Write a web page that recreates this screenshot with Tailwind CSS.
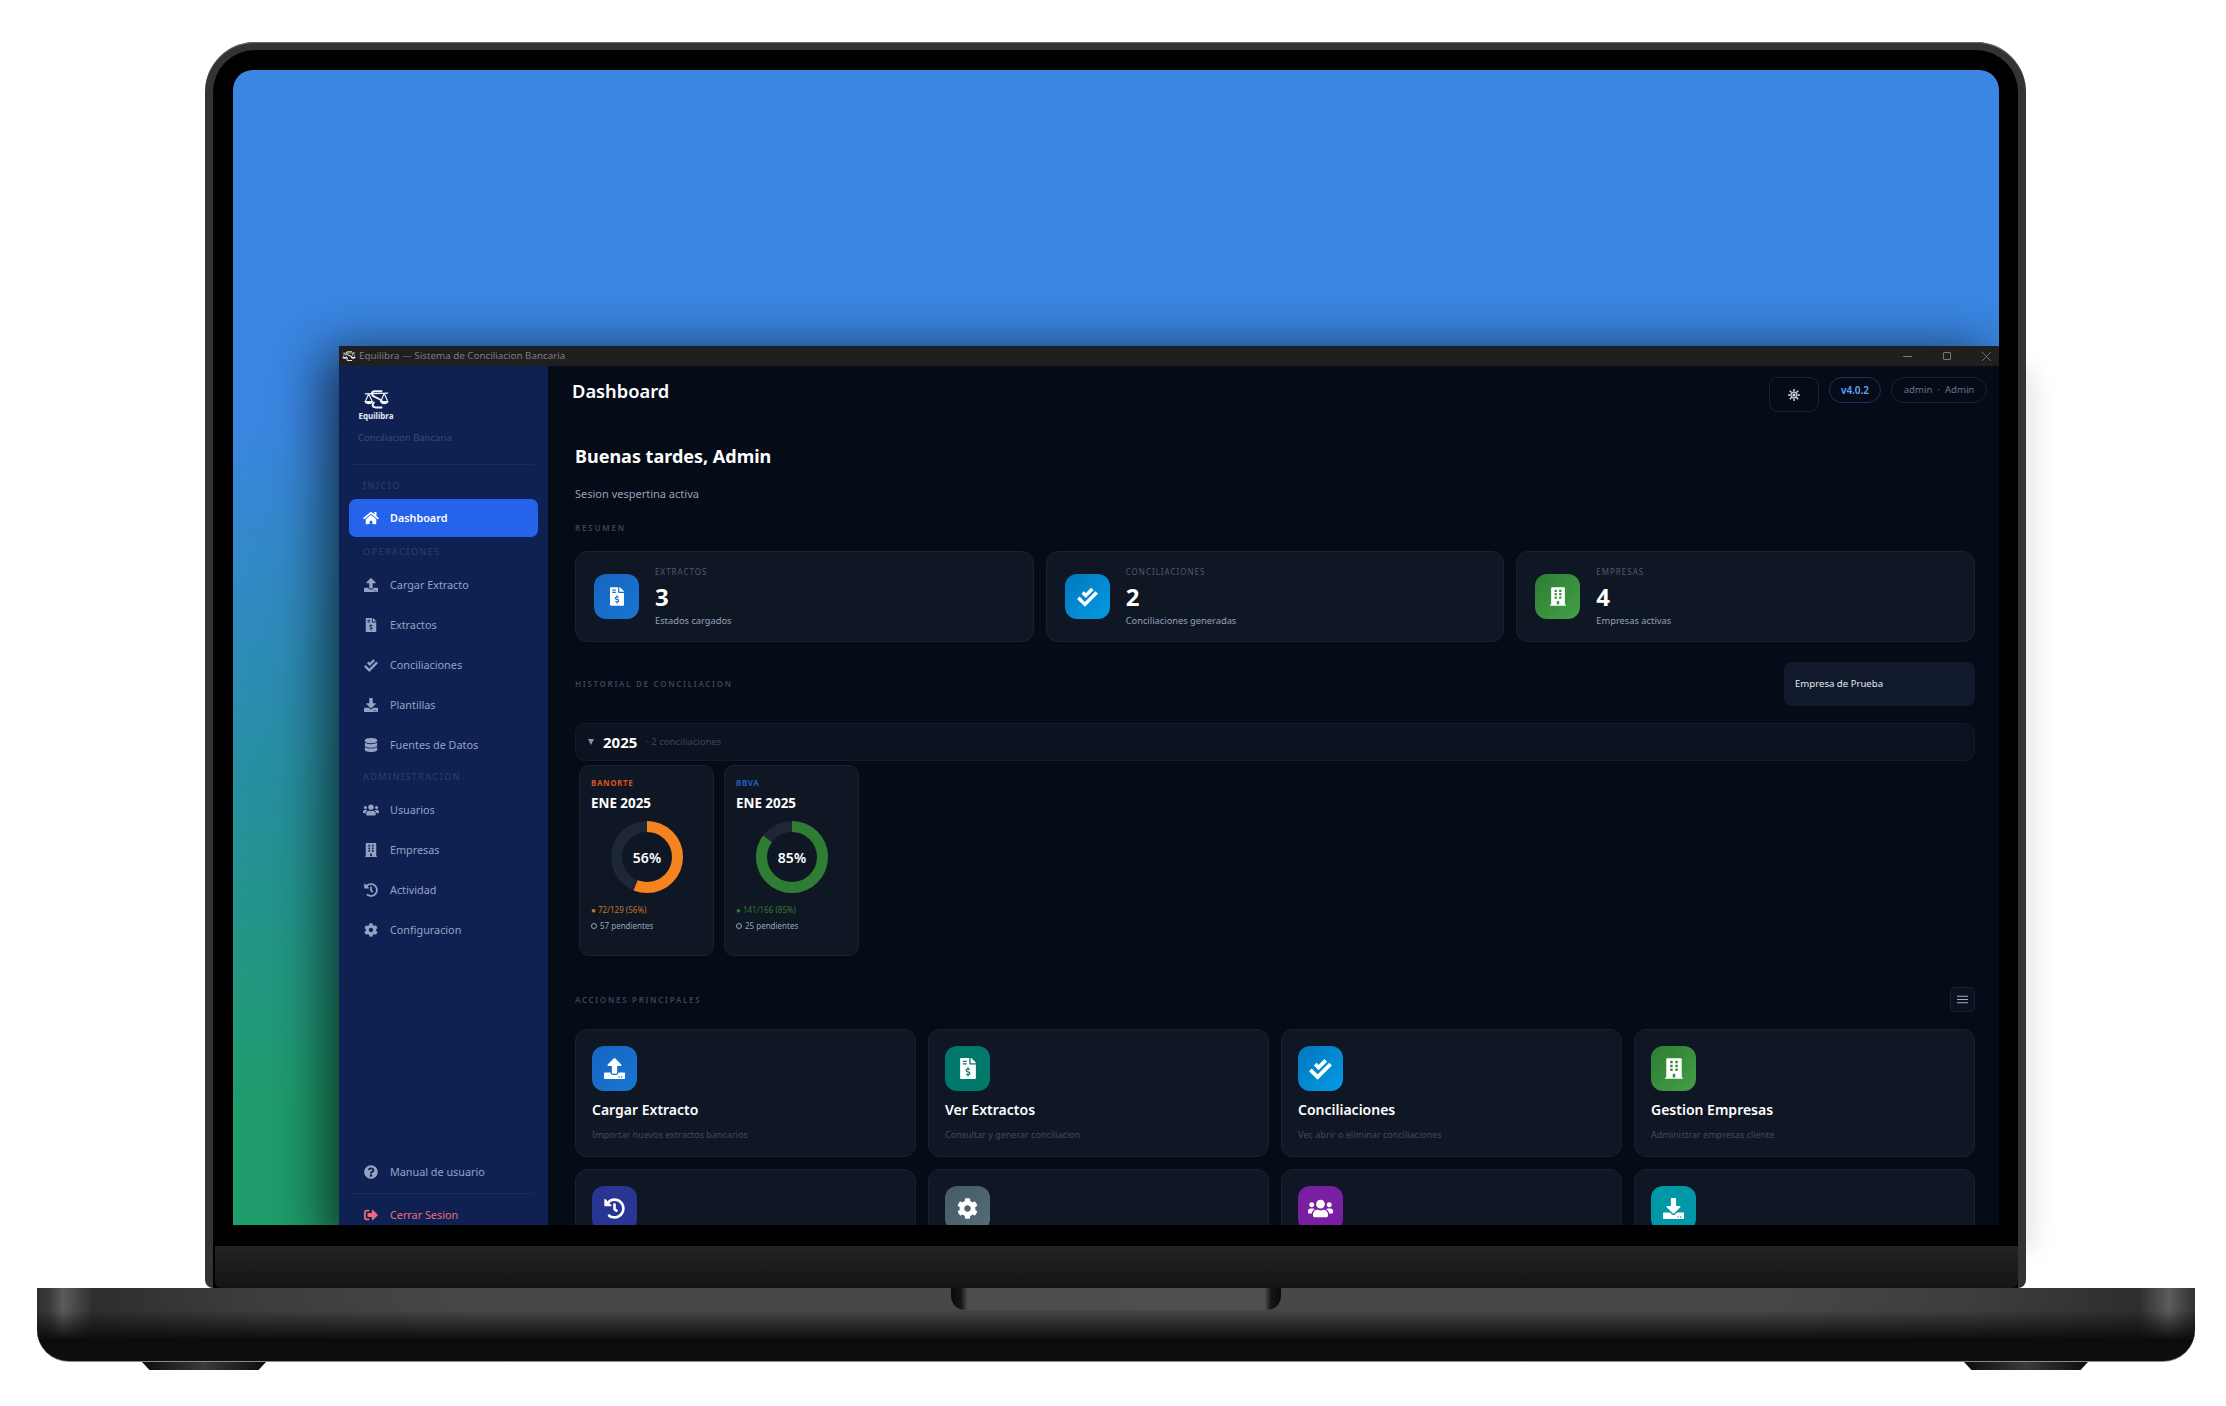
<!DOCTYPE html>
<html lang="es">
<head>
<meta charset="UTF-8">
<title>Equilibra — Sistema de Conciliacion Bancaria</title>
<script src="https://cdn.jsdelivr.net/npm/@tailwindcss/browser@4"></script>
</head>
<body class="bg-white font-['Noto_Sans',sans-serif] overflow-hidden">

<!-- iconos -->
<svg class="hidden">
  <symbol id="i-home" viewBox="0 0 576 512"><path fill="currentColor" d="M280.37 148.26L96 300.11V464a16 16 0 0 0 16 16l112.06-.29a16 16 0 0 0 15.92-16V368a16 16 0 0 1 16-16h64a16 16 0 0 1 16 16v95.64a16 16 0 0 0 16 16.05L464 480a16 16 0 0 0 16-16V300L295.67 148.26a12.19 12.19 0 0 0-15.3 0zM571.6 251.47L488 182.56V44.05a12 12 0 0 0-12-12h-56a12 12 0 0 0-12 12v72.61L318.47 43a48 48 0 0 0-61 0L4.34 251.47a12 12 0 0 0-1.6 16.9l25.5 31A12 12 0 0 0 45.15 301l235.22-193.74a12.19 12.19 0 0 1 15.3 0L530.9 301a12 12 0 0 0 16.9-1.6l25.5-31a12 12 0 0 0-1.7-16.93z"/></symbol>
  <symbol id="i-upload" viewBox="0 0 512 512"><path fill="currentColor" d="M296 384h-80c-13.3 0-24-10.7-24-24V192h-87.7c-17.8 0-26.7-21.5-14.1-34.1L242.3 5.7c7.5-7.5 19.8-7.5 27.3 0l152.2 152.2c12.6 12.6 3.7 34.1-14.1 34.1H320v168c0 13.3-10.7 24-24 24zm216-8v112c0 13.3-10.7 24-24 24H24c-13.3 0-24-10.7-24-24V376c0-13.3 10.7-24 24-24h136v8c0 30.9 25.1 56 56 56h80c30.9 0 56-25.1 56-56v-8h136c13.3 0 24 10.7 24 24zm-124 88c0-11-9-20-20-20s-20 9-20 20 9 20 20 20 20-9 20-20zm64 0c0-11-9-20-20-20s-20 9-20 20 9 20 20 20 20-9 20-20z"/></symbol>
  <symbol id="i-download" viewBox="0 0 512 512"><path fill="currentColor" d="M216 0h80c13.3 0 24 10.7 24 24v168h87.7c17.8 0 26.7 21.5 14.1 34.1L269.7 378.3c-7.5 7.5-19.8 7.5-27.3 0L90.1 226.1c-12.6-12.6-3.7-34.1 14.1-34.1H192V24c0-13.3 10.7-24 24-24zm296 376v112c0 13.3-10.7 24-24 24H24c-13.3 0-24-10.7-24-24V376c0-13.3 10.7-24 24-24h146.7l49 49c20.1 20.1 52.5 20.1 72.6 0l49-49H488c13.3 0 24 10.7 24 24zm-124 88c0-11-9-20-20-20s-20 9-20 20 9 20 20 20 20-9 20-20zm64 0c0-11-9-20-20-20s-20 9-20 20 9 20 20 20 20-9 20-20z"/></symbol>
  <symbol id="i-invoice" viewBox="0 0 384 512"><path fill="currentColor" d="M377 105L279.1 7c-4.5-4.5-10.6-7-17-7H256v128h128v-6.1c0-6.3-2.5-12.4-7-16.9zm-153 31V0H24C10.7 0 0 10.7 0 24v464c0 13.3 10.7 24 24 24h336c13.3 0 24-10.7 24-24V160H248c-13.2 0-24-10.8-24-24zM64 72c0-4.42 3.58-8 8-8h80c4.42 0 8 3.58 8 8v16c0 4.42-3.58 8-8 8H72c-4.42 0-8-3.58-8-8V72zm0 80v-16c0-4.42 3.58-8 8-8h80c4.42 0 8 3.58 8 8v16c0 4.42-3.58 8-8 8H72c-4.42 0-8-3.58-8-8zm144 263.88V440c0 4.42-3.58 8-8 8h-16c-4.42 0-8-3.58-8-8v-24.29c-11.29-.58-22.27-4.52-31.37-11.35-3.9-2.93-4.1-8.77-.57-12.14l11.75-11.21c2.77-2.64 6.89-2.76 10.13-.73 3.87 2.42 8.26 3.72 12.82 3.72h28.11c6.5 0 11.8-5.92 11.8-13.19 0-5.95-3.61-11.19-8.77-12.73l-45-13.5c-18.59-5.58-31.58-23.42-31.58-43.39 0-24.52 19.05-44.44 42.67-45.07V232c0-4.42 3.58-8 8-8h16c4.42 0 8 3.58 8 8v24.29c11.29.58 22.27 4.51 31.37 11.35 3.9 2.93 4.1 8.77.57 12.14l-11.75 11.21c-2.77 2.64-6.89 2.76-10.13.73-3.87-2.43-8.26-3.72-12.82-3.72h-28.11c-6.5 0-11.8 5.92-11.8 13.19 0 5.95 3.61 11.19 8.77 12.73l45 13.5c18.59 5.58 31.58 23.42 31.58 43.39 0 24.53-19.05 44.44-42.67 45.07z"/></symbol>
  <symbol id="i-check" viewBox="0 0 24 24"><path fill="none" stroke="currentColor" stroke-width="4" d="M1.500 13.500L9 21 22.500 7.500M6.500 7.500L10 11l7.500-7.500"/></symbol>
  <symbol id="i-database" viewBox="0 0 448 512"><path fill="currentColor" d="M448 73.143v45.714C448 159.143 347.667 192 224 192S0 159.143 0 118.857V73.143C0 32.857 100.333 0 224 0s224 32.857 224 73.143zM448 176v102.857C448 319.143 347.667 352 224 352S0 319.143 0 278.857V176c48.125 33.143 136.208 48.572 224 48.572S399.874 209.143 448 176zm0 160v102.857C448 479.143 347.667 512 224 512S0 479.143 0 438.857V336c48.125 33.143 136.208 48.572 224 48.572S399.874 369.143 448 336z"/></symbol>
  <symbol id="i-users" viewBox="0 0 640 512"><path fill="currentColor" d="M96 224c35.3 0 64-28.7 64-64s-28.7-64-64-64-64 28.7-64 64 28.7 64 64 64zm448 0c35.3 0 64-28.7 64-64s-28.7-64-64-64-64 28.7-64 64 28.7 64 64 64zm32 32h-64c-17.6 0-33.5 7.1-45.1 18.6 40.3 22.1 68.9 62 75.1 109.4h66c17.7 0 32-14.3 32-32v-32c0-35.3-28.7-64-64-64zm-256 0c61.9 0 112-50.1 112-112S381.9 32 320 32 208 82.1 208 144s50.1 112 112 112zm76.8 32h-8.3c-20.8 10-43.9 16-68.5 16s-47.6-6-68.5-16h-8.3C179.6 288 128 339.6 128 403.2V432c0 26.5 21.5 48 48 48h288c26.5 0 48-21.5 48-48v-28.8c0-63.6-51.6-115.2-115.2-115.2zm-223.7-13.4C161.5 263.1 145.6 256 128 256H64c-35.3 0-64 28.7-64 64v32c0 17.7 14.3 32 32 32h65.9c6.3-47.4 34.9-87.3 75.2-109.4z"/></symbol>
  <symbol id="i-building" viewBox="0 0 448 512"><path fill="currentColor" d="M436 480h-20V24c0-13.255-10.745-24-24-24H56C42.745 0 32 10.745 32 24v456H12c-6.627 0-12 5.373-12 12v20h448v-20c0-6.627-5.373-12-12-12zM128 76c0-6.627 5.373-12 12-12h40c6.627 0 12 5.373 12 12v40c0 6.627-5.373 12-12 12h-40c-6.627 0-12-5.373-12-12V76zm0 96c0-6.627 5.373-12 12-12h40c6.627 0 12 5.373 12 12v40c0 6.627-5.373 12-12 12h-40c-6.627 0-12-5.373-12-12v-40zm52 148h-40c-6.627 0-12-5.373-12-12v-40c0-6.627 5.373-12 12-12h40c6.627 0 12 5.373 12 12v40c0 6.627-5.373 12-12 12zm76 160h-64v-84c0-6.627 5.373-12 12-12h40c6.627 0 12 5.373 12 12v84zm64-172c0 6.627-5.373 12-12 12h-40c-6.627 0-12-5.373-12-12v-40c0-6.627 5.373-12 12-12h40c6.627 0 12 5.373 12 12v40zm0-96c0 6.627-5.373 12-12 12h-40c-6.627 0-12-5.373-12-12v-40c0-6.627 5.373-12 12-12h40c6.627 0 12 5.373 12 12v40zm0-96c0 6.627-5.373 12-12 12h-40c-6.627 0-12-5.373-12-12V76c0-6.627 5.373-12 12-12h40c6.627 0 12 5.373 12 12v40z"/></symbol>
  <symbol id="i-history" viewBox="0 0 512 512"><path fill="currentColor" d="M504 255.531c.253 136.64-111.18 248.372-247.82 248.468-59.015.042-113.223-20.53-155.822-54.911-11.077-8.94-11.905-25.541-1.839-35.607l11.267-11.267c8.609-8.609 22.353-9.551 31.891-1.984C173.062 425.135 212.781 440 256 440c101.705 0 184-82.311 184-184 0-101.705-82.311-184-184-184-48.814 0-93.149 18.969-126.068 49.932l50.754 50.754c10.08 10.08 2.941 27.314-11.313 27.314H24c-8.837 0-16-7.163-16-16V38.627c0-14.254 17.234-21.393 27.314-11.314l49.372 49.372C129.209 34.136 189.552 8 256 8c136.81 0 247.747 110.78 248 247.531zm-180.912 78.784l9.823-12.63c8.138-10.463 6.253-25.542-4.21-33.679L288 256.349V152c0-13.255-10.745-24-24-24h-16c-13.255 0-24 10.745-24 24v135.651l65.409 50.874c10.463 8.137 25.541 6.253 33.679-4.21z"/></symbol>
  <symbol id="i-cog" viewBox="0 0 512 512"><path fill="currentColor" d="M487.4 315.7l-42.6-24.6c4.3-23.2 4.3-47 0-70.2l42.6-24.6c4.9-2.8 7.1-8.6 5.5-14-11.1-35.6-30-67.8-54.7-94.6-3.8-4.1-10-5.1-14.8-2.3L380.8 110c-17.9-15.4-38.5-27.3-60.8-35.1V25.8c0-5.6-3.9-10.5-9.4-11.7-36.7-8.2-74.3-7.8-109.2 0-5.5 1.2-9.4 6.1-9.4 11.7V75c-22.2 7.9-42.8 19.8-60.8 35.1L88.7 85.5c-4.9-2.8-11-1.9-14.8 2.3-24.7 26.7-43.6 58.9-54.7 94.6-1.7 5.4.6 11.2 5.5 14L67.3 221c-4.3 23.2-4.3 47 0 70.2l-42.6 24.6c-4.9 2.8-7.1 8.6-5.5 14 11.1 35.6 30 67.8 54.7 94.6 3.8 4.1 10 5.1 14.8 2.3l42.6-24.6c17.9 15.4 38.5 27.3 60.8 35.1v49.2c0 5.6 3.9 10.5 9.4 11.7 36.7 8.2 74.3 7.8 109.2 0 5.5-1.2 9.4-6.1 9.4-11.7v-49.2c22.2-7.9 42.8-19.8 60.8-35.1l42.6 24.6c4.9 2.8 11 1.9 14.8-2.3 24.7-26.7 43.6-58.9 54.7-94.6 1.5-5.5-.7-11.3-5.6-14.1zM256 336c-44.1 0-80-35.9-80-80s35.9-80 80-80 80 35.9 80 80-35.9 80-80 80z"/></symbol>
  <symbol id="i-question" viewBox="0 0 512 512"><path fill="currentColor" d="M504 256c0 136.997-111.043 248-248 248S8 392.997 8 256C8 119.083 119.043 8 256 8s248 111.083 248 248zM262.655 90c-54.497 0-89.255 22.957-116.549 63.758-3.536 5.286-2.353 12.415 2.715 16.258l34.699 26.31c5.205 3.947 12.621 3.008 16.665-2.122 17.864-22.658 30.113-35.797 57.303-35.797 20.429 0 45.698 13.148 45.698 32.958 0 14.976-12.363 22.667-32.534 33.976C247.128 238.528 216 254.941 216 296v4c0 6.627 5.373 12 12 12h56c6.627 0 12-5.373 12-12v-1.333c0-28.462 83.186-29.647 83.186-106.667 0-58.002-60.165-102-116.531-102zM256 338c-25.365 0-46 20.635-46 46 0 25.364 20.635 46 46 46s46-20.636 46-46c0-25.365-20.635-46-46-46z"/></symbol>
  <symbol id="i-signout" viewBox="0 0 512 512"><path fill="currentColor" d="M497 273L329 441c-15 15-41 4.5-41-17v-96H152c-13.3 0-24-10.7-24-24v-96c0-13.3 10.7-24 24-24h136V88c0-21.4 25.9-32 41-17l168 168c9.3 9.4 9.3 24.6 0 34zM192 436v-40c0-6.6-5.4-12-12-12H96c-17.7 0-32-14.3-32-32V160c0-17.7 14.3-32 32-32h84c6.6 0 12-5.4 12-12V76c0-6.6-5.4-12-12-12H96c-53 0-96 43-96 96v192c0 53 43 96 96 96h84c6.6 0 12-5.4 12-12z"/></symbol>
  <symbol id="i-logo" viewBox="0 0 40 34" fill="none" stroke="currentColor">
    <path stroke-width="3" d="M29 5H17c-3 0-4 2-4 4s2 4 5 5l6 3c3 1.500 5 3 5 5M29 30H19c-3 0-5-2-5-4s1-3 3-4"/>
    <path stroke-width="1.800" d="M2 9l36-1M8 9L3 20M8 9l5 11M32 8l-5 12M32 8l5 12"/>
    <path fill="currentColor" stroke="none" d="M1 20h14c-1 4-4 5-7 5s-6-1-7-5zM25 20h14c-1 4-4 5-7 5s-6-1-7-5z"/>
  </symbol>
</svg>

<!-- sombra de la ventana que asoma por el lado derecho -->
<div class="absolute left-[1950px] top-[370px] w-[76px] h-[880px] shadow-[6px_0_26px_rgba(0,0,0,0.12)]"></div>

<!-- tapa del portatil -->
<div class="absolute left-[205px] top-[42px] w-[1821px] h-[1246px] rounded-t-[50px] rounded-b-[8px] bg-[#333333] px-[8px] pt-[8px] shadow-[inset_0_1px_0_#6a6a6a]">
  <div class="h-full rounded-t-[42px] bg-black pt-[20px] pl-[20px] pr-[19px] flex flex-col">
    <div class="relative h-[1155px] rounded-t-[20px] overflow-hidden bg-[linear-gradient(180deg,#3a86e2_0%,#3a86e2_30%,#2790a0_62%,#1f9d6c_90%,#1f9d6c_100%)]">

      <!-- ventana de la aplicacion -->
      <div class="absolute left-[106px] top-[276px] w-[1660px] h-[900px] flex flex-col bg-[#060b18] shadow-[-14px_6px_50px_rgba(0,0,0,0.65)]">
        <div class="h-[20px] shrink-0 flex items-center bg-[#1f1f1f] pl-[3px] pr-[8px] text-[9.8px] text-[#7d7d7d]">
          <svg class="w-[14px] h-[12px] text-[#e5e5e5] mr-[3px]"><use href="#i-logo"/></svg>
          <span>Equilibra — Sistema de Conciliacion Bancaria</span>
          <div class="ml-auto flex items-center gap-[31px]">
            <div class="w-[9px] h-px bg-[#777777]"></div>
            <div class="w-[8px] h-[8px] border border-[#777777] rounded-[1px]"></div>
            <svg class="w-[9px] h-[9px] text-[#777777]" viewBox="0 0 10 10"><path d="M0 0l10 10M10 0L0 10" stroke="currentColor"/></svg>
          </div>
        </div>

        <div class="flex flex-1 min-h-0">
          <!-- barra lateral -->
          <aside class="w-[209px] shrink-0 bg-[#0f2152] flex flex-col px-[10px] pb-[11px] text-[10.8px] text-[#94a3c4]">
            <div class="pl-[4px] pt-[22px]">
              <div class="w-[40px] ml-[3px] flex flex-col items-center">
                <svg class="w-[27px] h-[22px] text-[#f1f5f9]"><use href="#i-logo"/></svg>
                <span class="text-[8px] leading-[10px] font-bold text-[#e5e9f2] mt-[1px]">Equilibra</span>
              </div>
              <p class="text-[9.4px] leading-[14px] text-[#3a4b74] mt-[10px] ml-[5px]">Conciliacion Bancaria</p>
            </div>
            <div class="h-px bg-[#1c2c57] mt-[19px] mx-[4px]"></div>
            <p class="mt-[15px] pl-[14px] text-[9px] leading-[12px] tracking-[1.5px] text-[#2f3f6b]">INICIO</p>
            <a class="mt-[7px] h-[38px] flex items-center gap-[11px] pl-[14px] rounded-[7px] bg-[#2563eb] text-white font-semibold">
              <svg class="w-[16px] h-[14px]"><use href="#i-home"/></svg>Dashboard</a>
            <p class="mt-[9px] mb-[7px] pl-[14px] text-[9px] leading-[12px] tracking-[1.5px] text-[#2f3f6b]">OPERACIONES</p>
            <a class="h-[40px] flex items-center gap-[11px] pl-[14px]"><svg class="w-[16px] h-[14px]"><use href="#i-upload"/></svg>Cargar Extracto</a>
            <a class="h-[40px] flex items-center gap-[11px] pl-[14px]"><svg class="w-[16px] h-[14px]"><use href="#i-invoice"/></svg>Extractos</a>
            <a class="h-[40px] flex items-center gap-[11px] pl-[14px]"><svg class="w-[16px] h-[14px]"><use href="#i-check"/></svg>Conciliaciones</a>
            <a class="h-[40px] flex items-center gap-[11px] pl-[14px]"><svg class="w-[16px] h-[14px]"><use href="#i-download"/></svg>Plantillas</a>
            <a class="h-[40px] flex items-center gap-[11px] pl-[14px]"><svg class="w-[16px] h-[14px]"><use href="#i-database"/></svg>Fuentes de Datos</a>
            <p class="mt-[6px] mb-[7px] pl-[14px] text-[9px] leading-[12px] tracking-[1.5px] text-[#2f3f6b]">ADMINISTRACION</p>
            <a class="h-[40px] flex items-center gap-[11px] pl-[14px]"><svg class="w-[16px] h-[14px]"><use href="#i-users"/></svg>Usuarios</a>
            <a class="h-[40px] flex items-center gap-[11px] pl-[14px]"><svg class="w-[16px] h-[14px]"><use href="#i-building"/></svg>Empresas</a>
            <a class="h-[40px] flex items-center gap-[11px] pl-[14px]"><svg class="w-[16px] h-[14px]"><use href="#i-history"/></svg>Actividad</a>
            <a class="h-[40px] flex items-center gap-[11px] pl-[14px]"><svg class="w-[16px] h-[14px]"><use href="#i-cog"/></svg>Configuracion</a>
            <a class="mt-auto h-[40px] flex items-center gap-[11px] pl-[14px]"><svg class="w-[16px] h-[14px]"><use href="#i-question"/></svg>Manual de usuario</a>
            <div class="h-px bg-[#1c2c57] mx-[4px] my-[1px]"></div>
            <a class="h-[40px] flex items-center gap-[11px] pl-[14px] text-[#ee6b7b]"><svg class="w-[16px] h-[14px]"><use href="#i-signout"/></svg>Cerrar Sesion</a>
          </aside>

          <!-- contenido -->
          <main class="flex-1 min-w-0 bg-[#060b18]">
            <header class="flex justify-between items-start pt-[11px] pl-[24px] pr-[12px]">
              <h1 class="text-[18.3px] leading-[28px] font-semibold text-white">Dashboard</h1>
              <div class="flex items-start gap-[10px]">
                <button class="w-[50px] h-[35px] flex items-center justify-center rounded-[9px] border border-[#1a2233] text-[#cbd5e1]">
                  <svg class="w-[12px] h-[12px]" viewBox="0 0 24 24" stroke="currentColor" stroke-width="3"><path d="M12 0v5M12 19v5M0 12h5M19 12h5M3.500 3.500L7 7M17 17l3.500 3.500M3.500 20.500L7 17M17 7l3.500-3.500"/><circle cx="12" cy="12" r="7" fill="currentColor" stroke="none"/><circle cx="12" cy="12" r="4" fill="none" stroke="#060b18" stroke-width="1.500"/></svg>
                </button>
                <span class="w-[52px] h-[26px] flex items-center justify-center rounded-[13px] border border-[#1c3258] text-[10px] font-semibold text-[#60a5fa]">v4.0.2</span>
                <span class="w-[96px] h-[26px] flex items-center justify-center rounded-[13px] border border-[#1a2233] text-[9.6px] text-[#64748b]">admin &nbsp;·&nbsp; Admin</span>
              </div>
            </header>

            <div class="pl-[27px] pr-[24px]">
              <h2 class="mt-[30px] text-[18px] leading-[28px] font-bold text-white">Buenas tardes, Admin</h2>
              <p class="mt-[16px] text-[11px] leading-[16px] text-[#94a3b8]">Sesion vespertina activa</p>
              <p class="mt-[20px] text-[8px] leading-[12px] font-semibold tracking-[1.8px] text-[#3a465c]">RESUMEN</p>

              <section class="mt-[17px] grid grid-cols-3 gap-[12px]">
                <div class="h-[91px] flex items-center gap-[16px] pl-[18px] rounded-[12px] border border-[#1a2232] bg-[#0f1624]">
                  <div class="w-[45px] h-[45px] flex items-center justify-center rounded-[12px] bg-[linear-gradient(135deg,#1565c0,#1976d2)] text-white"><svg class="w-[14px] h-[19px]"><use href="#i-invoice"/></svg></div>
                  <div>
                    <p class="text-[8px] leading-[12px] tracking-[1px] text-[#4f5b70]">EXTRACTOS</p>
                    <p class="mt-[4px] text-[24px] leading-[30px] font-bold text-white">3</p>
                    <p class="mt-[2px] text-[9.3px] leading-[14px] text-[#94a3b8]">Estados cargados</p>
                  </div>
                </div>
                <div class="h-[91px] flex items-center gap-[16px] pl-[18px] rounded-[12px] border border-[#1a2232] bg-[#0f1624]">
                  <div class="w-[45px] h-[45px] flex items-center justify-center rounded-[12px] bg-[linear-gradient(135deg,#0277bd,#039be5)] text-white"><svg class="w-[21px] h-[21px]"><use href="#i-check"/></svg></div>
                  <div>
                    <p class="text-[8px] leading-[12px] tracking-[1px] text-[#4f5b70]">CONCILIACIONES</p>
                    <p class="mt-[4px] text-[24px] leading-[30px] font-bold text-white">2</p>
                    <p class="mt-[2px] text-[9.3px] leading-[14px] text-[#94a3b8]">Conciliaciones generadas</p>
                  </div>
                </div>
                <div class="h-[91px] flex items-center gap-[16px] pl-[18px] rounded-[12px] border border-[#1a2232] bg-[#0f1624]">
                  <div class="w-[45px] h-[45px] flex items-center justify-center rounded-[12px] bg-[linear-gradient(135deg,#2e7d32,#43a047)] text-white"><svg class="w-[16px] h-[19px]"><use href="#i-building"/></svg></div>
                  <div>
                    <p class="text-[8px] leading-[12px] tracking-[1px] text-[#4f5b70]">EMPRESAS</p>
                    <p class="mt-[4px] text-[24px] leading-[30px] font-bold text-white">4</p>
                    <p class="mt-[2px] text-[9.3px] leading-[14px] text-[#94a3b8]">Empresas activas</p>
                  </div>
                </div>
              </section>

              <div class="mt-[20px] flex items-center justify-between">
                <p class="text-[8px] leading-[12px] font-semibold tracking-[1.7px] text-[#3a465c]">HISTORIAL DE CONCILIACION</p>
                <div class="w-[191px] h-[44px] flex items-center pl-[11px] rounded-[8px] bg-[#111a2c] text-[9.6px] text-[#e2e8f0]">Empresa de Prueba</div>
              </div>

              <div class="mt-[17px] h-[38px] flex items-center pl-[12px] rounded-[10px] border border-[#141c2b] bg-[#0c1220]">
                <span class="w-0 h-0 border-x-[3.500px] border-x-transparent border-t-[6px] border-t-[#8a96a8]"></span>
                <span class="ml-[9px] text-[15px] font-bold text-white">2025</span>
                <span class="ml-[9px] text-[9.5px] text-[#3b4658]">· 2 conciliaciones</span>
              </div>

              <section class="mt-[4px] pl-[4px] flex gap-[10px]">
                <div class="w-[135px] h-[191px] rounded-[10px] border border-[#1a2232] bg-[#0f1624] pl-[11px] pt-[11px]">
                  <p class="text-[8px] leading-[12px] font-bold tracking-[0.6px] text-[#d9541e]">BANORTE</p>
                  <p class="mt-[5px] text-[13.4px] leading-[18px] font-bold text-white">ENE 2025</p>
                  <div class="relative mt-[9px] ml-[20px] w-[72px] h-[72px]">
                    <svg class="w-[72px] h-[72px] -rotate-90" viewBox="0 0 72 72" fill="none" stroke-width="11"><circle cx="36" cy="36" r="30.500" stroke="#1e2736"/><circle cx="36" cy="36" r="30.500" stroke="#f5841f" stroke-dasharray="107.300 191.600"/></svg>
                    <span class="absolute inset-0 flex items-center justify-center text-[14px] font-semibold text-white">56%</span>
                  </div>
                  <p class="mt-[11px] text-[8px] leading-[12px] text-[#c2752c]">● 72/129 (56%)</p>
                  <p class="mt-[4px] flex items-center gap-[3px] text-[8px] leading-[12px] text-[#94a3b8]"><span class="w-[6px] h-[6px] rounded-full border border-[#94a3b8]"></span>57 pendientes</p>
                </div>
                <div class="w-[135px] h-[191px] rounded-[10px] border border-[#1a2232] bg-[#0f1624] pl-[11px] pt-[11px]">
                  <p class="text-[8px] leading-[12px] font-bold tracking-[0.6px] text-[#1d5fb8]">BBVA</p>
                  <p class="mt-[5px] text-[13.4px] leading-[18px] font-bold text-white">ENE 2025</p>
                  <div class="relative mt-[9px] ml-[20px] w-[72px] h-[72px]">
                    <svg class="w-[72px] h-[72px] -rotate-90" viewBox="0 0 72 72" fill="none" stroke-width="11"><circle cx="36" cy="36" r="30.500" stroke="#1e2736"/><circle cx="36" cy="36" r="30.500" stroke="#2e7d32" stroke-dasharray="162.900 191.600"/></svg>
                    <span class="absolute inset-0 flex items-center justify-center text-[14px] font-semibold text-white">85%</span>
                  </div>
                  <p class="mt-[11px] text-[8px] leading-[12px] text-[#2e7d32]">● 141/166 (85%)</p>
                  <p class="mt-[4px] flex items-center gap-[3px] text-[8px] leading-[12px] text-[#94a3b8]"><span class="w-[6px] h-[6px] rounded-full border border-[#94a3b8]"></span>25 pendientes</p>
                </div>
              </section>

              <div class="mt-[31px] flex items-center justify-between">
                <p class="text-[8px] leading-[12px] font-semibold tracking-[1.7px] text-[#3a465c]">ACCIONES PRINCIPALES</p>
                <button class="w-[25px] h-[25px] flex items-center justify-center rounded-[5px] border border-[#1a2232] bg-[#0b1120] text-[#a0aec0]">
                  <svg class="w-[11px] h-[11px]" viewBox="0 0 12 12" stroke="currentColor" stroke-width="1.200"><path d="M0 2.500h12M0 6h12M0 9.500h12"/></svg>
                </button>
              </div>

              <section class="mt-[17px] grid grid-cols-4 gap-[12px]">
                <div class="h-[128px] pl-[16px] pt-[16px] rounded-[12px] border border-[#1a2232] bg-[#0f1624]">
                  <div class="w-[45px] h-[45px] flex items-center justify-center rounded-[12px] bg-[linear-gradient(135deg,#1565c0,#1976d2)] text-white"><svg class="w-[21px] h-[21px]"><use href="#i-upload"/></svg></div>
                  <p class="mt-[9px] text-[14px] leading-[20px] font-semibold text-white">Cargar Extracto</p>
                  <p class="mt-[8px] text-[9px] leading-[14px] text-[#414c5e]">Importar nuevos extractos bancarios</p>
                </div>
                <div class="h-[128px] pl-[16px] pt-[16px] rounded-[12px] border border-[#1a2232] bg-[#0f1624]">
                  <div class="w-[45px] h-[45px] flex items-center justify-center rounded-[12px] bg-[#00796b] text-white"><svg class="w-[16px] h-[21px]"><use href="#i-invoice"/></svg></div>
                  <p class="mt-[9px] text-[14px] leading-[20px] font-semibold text-white">Ver Extractos</p>
                  <p class="mt-[8px] text-[9px] leading-[14px] text-[#414c5e]">Consultar y generar conciliacion</p>
                </div>
                <div class="h-[128px] pl-[16px] pt-[16px] rounded-[12px] border border-[#1a2232] bg-[#0f1624]">
                  <div class="w-[45px] h-[45px] flex items-center justify-center rounded-[12px] bg-[linear-gradient(135deg,#0277bd,#039be5)] text-white"><svg class="w-[23px] h-[23px]"><use href="#i-check"/></svg></div>
                  <p class="mt-[9px] text-[14px] leading-[20px] font-semibold text-white">Conciliaciones</p>
                  <p class="mt-[8px] text-[9px] leading-[14px] text-[#414c5e]">Ver, abrir o eliminar conciliaciones</p>
                </div>
                <div class="h-[128px] pl-[16px] pt-[16px] rounded-[12px] border border-[#1a2232] bg-[#0f1624]">
                  <div class="w-[45px] h-[45px] flex items-center justify-center rounded-[12px] bg-[linear-gradient(135deg,#2e7d32,#43a047)] text-white"><svg class="w-[18px] h-[21px]"><use href="#i-building"/></svg></div>
                  <p class="mt-[9px] text-[14px] leading-[20px] font-semibold text-white">Gestion Empresas</p>
                  <p class="mt-[8px] text-[9px] leading-[14px] text-[#414c5e]">Administrar empresas cliente</p>
                </div>
                <div class="h-[128px] pl-[16px] pt-[16px] rounded-[12px] border border-[#1a2232] bg-[#0f1624]">
                  <div class="w-[45px] h-[45px] flex items-center justify-center rounded-[12px] bg-[#283593] text-white"><svg class="w-[21px] h-[21px]"><use href="#i-history"/></svg></div>
                </div>
                <div class="h-[128px] pl-[16px] pt-[16px] rounded-[12px] border border-[#1a2232] bg-[#0f1624]">
                  <div class="w-[45px] h-[45px] flex items-center justify-center rounded-[12px] bg-[linear-gradient(135deg,#455a64,#546e7a)] text-white"><svg class="w-[21px] h-[21px]"><use href="#i-cog"/></svg></div>
                </div>
                <div class="h-[128px] pl-[16px] pt-[16px] rounded-[12px] border border-[#1a2232] bg-[#0f1624]">
                  <div class="w-[45px] h-[45px] flex items-center justify-center rounded-[12px] bg-[#7b1fa2] text-white"><svg class="w-[25px] h-[21px]"><use href="#i-users"/></svg></div>
                </div>
                <div class="h-[128px] pl-[16px] pt-[16px] rounded-[12px] border border-[#1a2232] bg-[#0f1624]">
                  <div class="w-[45px] h-[45px] flex items-center justify-center rounded-[12px] bg-[#0097a7] text-white"><svg class="w-[21px] h-[21px]"><use href="#i-download"/></svg></div>
                </div>
              </section>
            </div>
          </main>
        </div>
      </div>
    </div>
    <!-- barbilla -->
    <div class="flex-1 pt-[21px] -ml-[18px] -mr-[19px]">
      <div class="h-full rounded-b-[6px] bg-[linear-gradient(180deg,#232323,#141414)]"></div>
    </div>
  </div>
</div>

<!-- base del portatil -->
<div class="absolute left-[37px] top-[1288px] w-[2158px] h-[74px] rounded-b-[32px] border-b border-[#8a8a8a] bg-[linear-gradient(180deg,transparent_30%,#0b0b0b_72%,#0f0f0f_100%),linear-gradient(90deg,#303030_0,#3a3a3a_0.6%,#5c5c5c_1.2%,#2e2e2e_2.6%,#3d3d3d_10%,#474747_20%,#474747_80%,#3d3d3d_90%,#2e2e2e_97.4%,#5c5c5c_98.800%,#303030_100%)]">
  <div class="absolute left-[914px] top-0 w-[330px] h-[22px] rounded-b-[14px] bg-[linear-gradient(90deg,#0a0a0a_0,#161616_3%,#4c4c4c_5%,#505050_95%,#161616_97%,#0a0a0a_100%)]"></div>
</div>
<div class="absolute left-[142px] top-[1362px] w-[124px] h-[8px] rounded-b-[6px] bg-[linear-gradient(90deg,#0c0c0c,#3a3a3a_50%,#0c0c0c)] [clip-path:polygon(0_0,100%_0,94%_100%,6%_100%)]"></div>
<div class="absolute left-[1964px] top-[1362px] w-[124px] h-[8px] rounded-b-[6px] bg-[linear-gradient(90deg,#0c0c0c,#3a3a3a_50%,#0c0c0c)] [clip-path:polygon(0_0,100%_0,94%_100%,6%_100%)]"></div>
</body>
</html>
